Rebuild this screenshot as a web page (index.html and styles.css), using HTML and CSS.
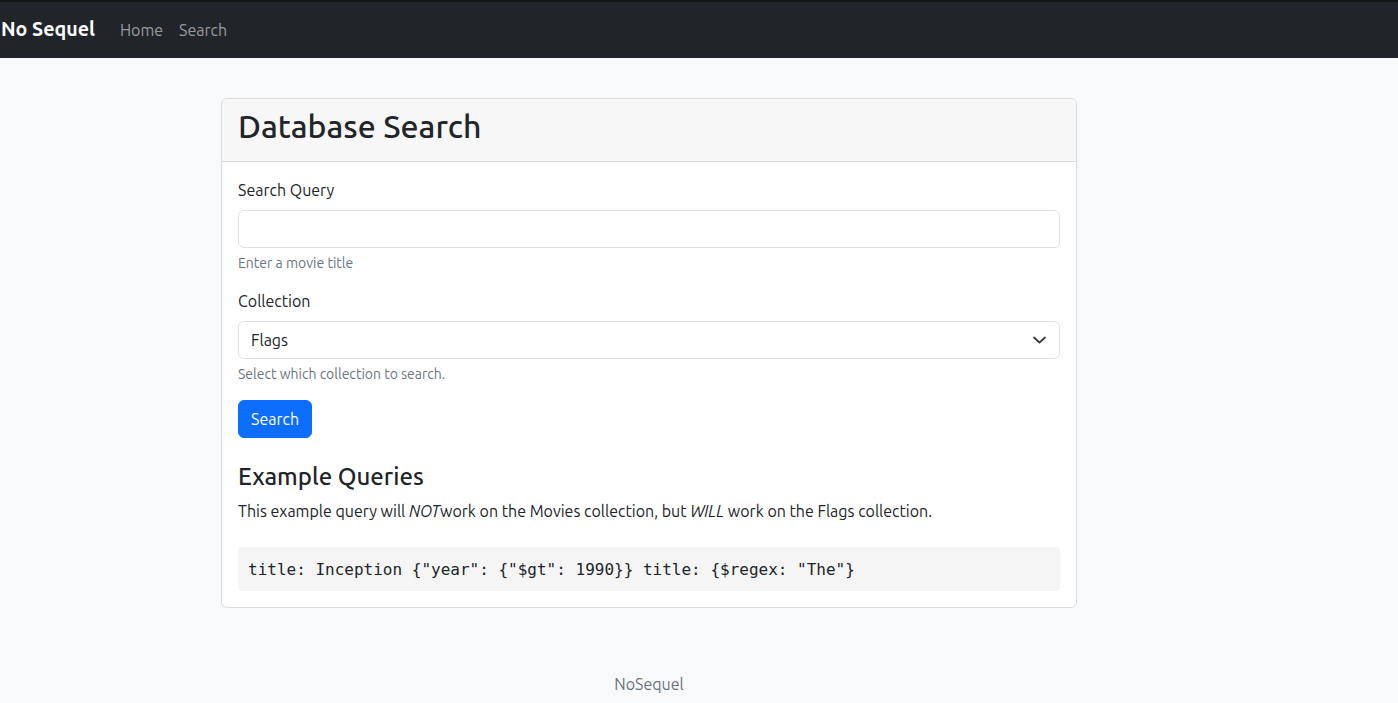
FILE: index.html
```html
<!DOCTYPE html>
<html lang="en">
<head>
<meta charset="utf-8">
<title>No Sequel</title>
<link rel="stylesheet" href="styles.css">
</head>
<body>
<nav class="navbar">
  <a class="brand" href="#">No Sequel</a>
  <a class="nav-link" href="#">Home</a>
  <a class="nav-link" href="#">Search</a>
</nav>
<main class="wrap">
  <section class="card">
    <header class="card-header">
      <h2 class="card-title">Database Search</h2>
    </header>
    <div class="card-body">
      <div class="field">
        <label class="label" for="q">Search Query</label>
        <input class="control" id="q" type="text">
        <div class="help">Enter a movie title</div>
      </div>
      <div class="field">
        <label class="label" for="c">Collection</label>
        <div class="select">
          <span>Flags</span>
          <svg class="chev" width="13" height="8" viewBox="0 0 13 8"><path d="M1 1.5L6.5 6.5L12 1.5" fill="none" stroke="#343a40" stroke-width="1.8" stroke-linecap="round" stroke-linejoin="round"/></svg>
        </div>
        <div class="help">Select which collection to search.</div>
      </div>
      <button class="btn" type="button">Search</button>
      <h4 class="examples">Example Queries</h4>
      <p class="text">This example query will <em>NOT</em>work on the Movies collection, but <em>WILL</em> work on the Flags collection.</p>
      <pre class="code">title: Inception {"year": {"$gt": 1990}} title: {$regex: "The"}</pre>
    </div>
  </section>
  <footer class="footer">NoSequel</footer>
</main>
</body>
</html>
```
FILE: styles.css
```css
* { box-sizing: border-box; }
body {
  margin: 0;
  background: #f8f9fa;
  color: #212529;
  font-family: Ubuntu, "Open Sans", "Noto Sans", sans-serif;
  font-size: 16px;
  line-height: 1.5;
}
.navbar {
  display: flex;
  align-items: center;
  background: #212529;
  border-top: 2px solid #121416;
  height: 58px;
  padding: 0 1px;
}
.brand {
  color: #fff;
  font-weight: 700;
  font-size: 19.6px;
  text-decoration: none;
  margin-right: 17px;
}
.nav-link {
  color: rgba(255,255,255,.55);
  text-decoration: none;
  padding: 0 8px;
}
.wrap {
  width: 856px;
  margin-left: 221px;
  padding-top: 40px;
}
.card {
  background: #fff;
  border: 1px solid #d9dcdf;
  border-radius: 6px;
}
.card-header {
  background: #f7f7f7;
  border-bottom: 1px solid #d9dcdf;
  border-radius: 5px 5px 0 0;
  padding: 8px 16px;
}
.card-title {
  margin: 0 0 8px;
  font-size: 32px;
  font-weight: 500;
  line-height: 1.2;
}
.card-body { padding: 16px; }
.field { margin-bottom: 16px; }
.label { display: block; margin-bottom: 8px; }
.control, .select {
  display: flex;
  align-items: center;
  width: 100%;
  height: 38px;
  border: 1px solid #dee2e6;
  border-radius: 6px;
  background: #fff;
  font: inherit;
  padding: 6px 12px;
}
.select { justify-content: space-between; padding-right: 13px; }
.help {
  margin-top: 5px;
  font-size: 14px;
  line-height: 20px;
  color: #6c757d;
}
.btn {
  background: #0d6efd;
  color: #fff;
  border: 1px solid #0d6efd;
  border-radius: 6px;
  font: inherit;
  height: 38px;
  padding: 0 12px;
}
.examples {
  margin: 25px 0 7px;
  font-size: 24px;
  font-weight: 500;
  line-height: 1.2;
}
.text { margin: 0 0 24px; }
.code {
  margin: 0;
  background: #f5f5f5;
  border-radius: 4px;
  padding: 8px 10px 7px;
  font-family: "DejaVu Sans Mono", monospace;
  font-size: 16px;
  line-height: 29px;
  color: #212529;
}
.footer {
  text-align: center;
  color: #6c757d;
  padding-top: 64px;
}
```
